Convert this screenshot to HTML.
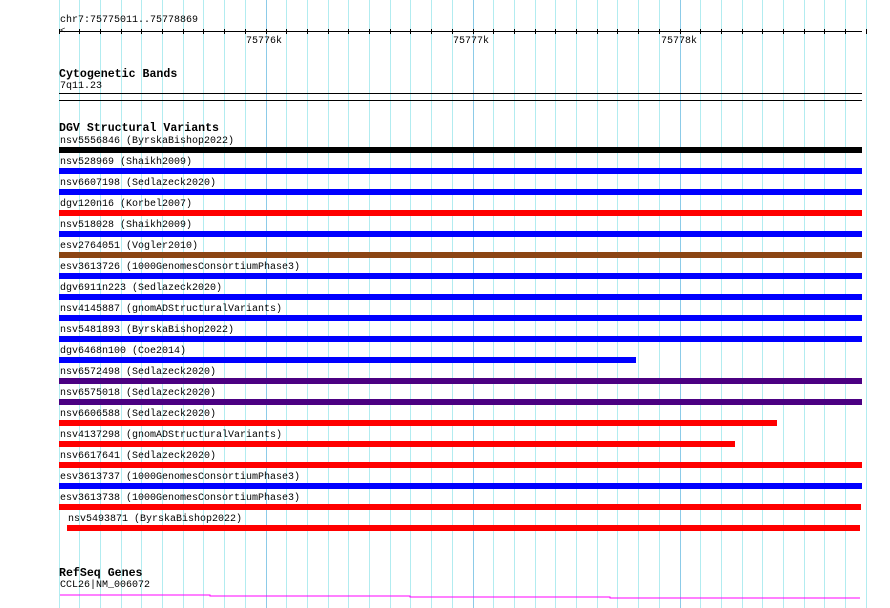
<!DOCTYPE html><html><head><style>
body{margin:0;width:890px;height:608px;background:#fff;position:relative;overflow:hidden;font-family:"Liberation Mono",monospace}
div{position:absolute}
.g{top:0;height:608px;width:1px;background:#b2ecf0}
.G{top:0;height:608px;width:1px;background:#8ccbe8}
.t{font-size:10px;line-height:10px;color:#000;white-space:nowrap}
.b{height:6px}
.h{font-size:11.6px;font-weight:bold;line-height:12px}
</style></head><body>
<script>
var s='';
for(var i=0;i<40;i++){var x=Math.round(58.5+20.7*i);s+='<div class="'+((i%10==0&&i>0)?'G':'g')+'" style="left:'+x+'px"></div>';}
document.write(s);
</script>
<div style="left:60px;top:16px" class="t">chr7:75775011..75778869</div>
<div style="left:60px;top:31px;width:802px;height:1px;background:#000"></div>
<div style="left:60px;top:28px;font-size:9px;line-height:7px">&lt;</div>
<script>
var s='';for(var i=0;i<40;i++){var x=Math.round(58.5+20.7*i);s+='<div style="left:'+x+'px;top:29px;width:1px;height:5px;background:#000"></div>';}
document.write(s);
</script>
<div class="t" style="left:246px;top:37px">75776k</div>
<div class="t" style="left:453px;top:37px">75777k</div>
<div class="t" style="left:661px;top:37px">75778k</div>
<div class="h" style="left:59px;top:69px">Cytogenetic Bands</div>
<div class="t" style="left:60px;top:82px">7q11.23</div>
<div style="left:59px;top:93px;width:803px;height:1px;background:#000"></div>
<div style="left:59px;top:100px;width:803px;height:1px;background:#000"></div>
<div class="h" style="left:59px;top:123px">DGV Structural Variants</div>
<script>
var r=[["nsv5556846 (ByrskaBishop2022)","#000",59,862],["nsv528969 (Shaikh2009)","#00f",59,862],["nsv6607198 (Sedlazeck2020)","#00f",59,862],["dgv120n16 (Korbel2007)","#f00",59,862],["nsv518028 (Shaikh2009)","#00f",59,862],["esv2764051 (Vogler2010)","#8b4513",59,862],["esv3613726 (1000GenomesConsortiumPhase3)","#00f",59,862],["dgv6911n223 (Sedlazeck2020)","#00f",59,862],["nsv4145887 (gnomADStructuralVariants)","#00f",59,862],["nsv5481893 (ByrskaBishop2022)","#00f",59,862],["dgv6468n100 (Coe2014)","#00f",59,636],["nsv6572498 (Sedlazeck2020)","#4b0082",59,862],["nsv6575018 (Sedlazeck2020)","#4b0082",59,862],["nsv6606588 (Sedlazeck2020)","#f00",59,777],["nsv4137298 (gnomADStructuralVariants)","#f00",59,735],["nsv6617641 (Sedlazeck2020)","#f00",59,862],["esv3613737 (1000GenomesConsortiumPhase3)","#00f",59,862],["esv3613738 (1000GenomesConsortiumPhase3)","#f00",59,861],["nsv5493871 (ByrskaBishop2022)","#f00",67,860]];
var s='';
r.forEach(function(a,i){var y=147+21*i;s+='<div class="t" style="left:'+(a[2]+1)+'px;top:'+(y-10)+'px">'+a[0]+'</div><div class="b" style="left:'+a[2]+'px;top:'+y+'px;width:'+(a[3]-a[2])+'px;background:'+a[1]+'"></div>';});
document.write(s);
</script>
<div class="h" style="left:59px;top:568px">RefSeq Genes</div>
<div class="t" style="left:60px;top:581px">CCL26|NM_006072</div>
<svg style="position:absolute;left:0;top:0" width="890" height="608"><polyline points="60,595 210,595 210,596 410,596 410,597 610,597 610,598 710,598 710,598 860,598" fill="none" stroke="#f0f" stroke-width="1"/></svg>
</body></html>
